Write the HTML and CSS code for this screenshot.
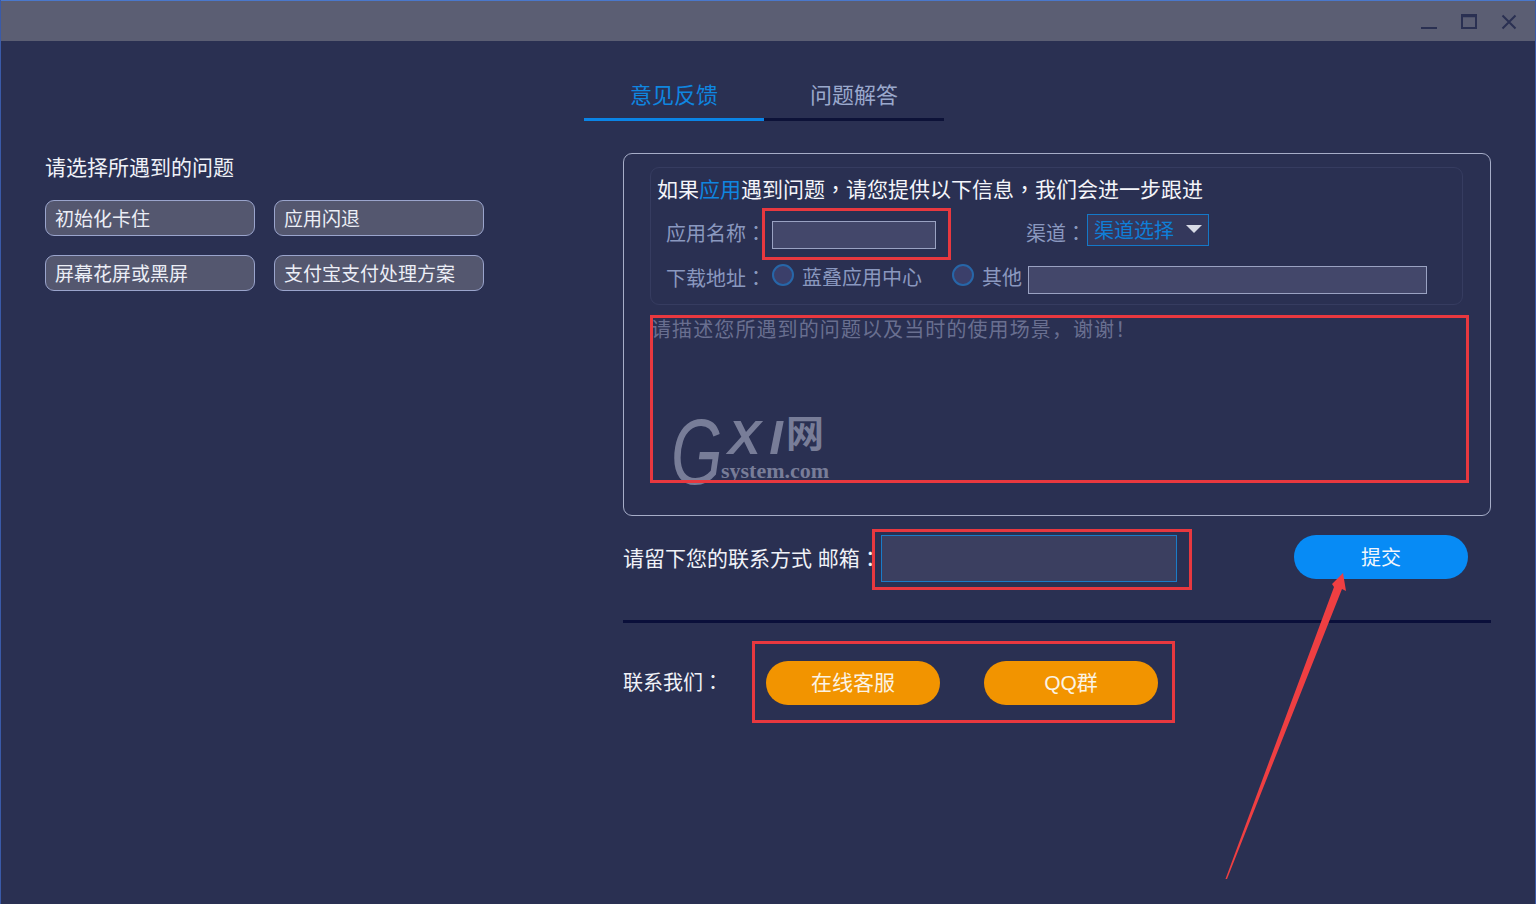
FILE: index.html
```html
<!DOCTYPE html>
<html lang="zh-CN">
<head>
    <meta charset="UTF-8">
    <meta name="viewport" content="width=device-width, initial-scale=1.0">
    <title>意见反馈</title>
    <link rel="stylesheet" href="styles.css">
</head>
<body>

<div class="app">
    <div class="titlebar">
        <svg class="win-icon" width="20" height="20" viewBox="0 0 20 20"><path d="M2 16H18" fill="none" stroke="#2a3052" stroke-width="2"/></svg>
        <svg class="win-icon" width="20" height="20" viewBox="0 0 20 20"><path d="M3 3H17V16H3Z M3 4.2H17" fill="none" stroke="#2a3052" stroke-width="2"/></svg>
        <svg class="win-icon" width="20" height="20" viewBox="0 0 20 20"><path d="M3.5 3.5L16.5 16.5M16.5 3.5L3.5 16.5" fill="none" stroke="#2a3052" stroke-width="2"/></svg>
    </div>

    <div class="tabs">
        <div class="tab active">意见反馈</div>
        <div class="tab">问题解答</div>
    </div>

    <div class="main">
        <div class="side">
            <h2 class="side-title">请选择所遇到的问题</h2>
            <div class="issue-grid">
                <button class="issue-btn">初始化卡住</button>
                <button class="issue-btn">应用闪退</button>
                <button class="issue-btn">屏幕花屏或黑屏</button>
                <button class="issue-btn">支付宝支付处理方案</button>
            </div>
        </div>

        <div class="content">
            <div class="panel">
                <div class="info-box">
                    <div class="info-title">如果<span class="blue">应用</span>遇到问题<span class="mid" lang="zh-TW">，</span>请您提供以下信息<span class="mid" lang="zh-TW">，</span>我们会进一步跟进</div>
                    <div class="form-row">
                        <label class="field-label label-wide drop">应用名称<span class="mid" lang="zh-TW">：</span></label>
                        <input class="text-input name-input" type="text">
                        <label class="field-label channel-label drop">渠道<span class="mid" lang="zh-TW">：</span></label>
                        <div class="select-box">
                            <span>渠道选择</span>
                            <span class="select-arrow"></span>
                        </div>
                    </div>
                    <div class="form-row row-address">
                        <label class="field-label label-wide">下载地址<span class="mid" lang="zh-TW">：</span></label>
                        <span class="radio"></span>
                        <span class="field-label radio-text">蓝叠应用中心</span>
                        <span class="radio radio-other"></span>
                        <span class="field-label radio-text">其他</span>
                        <input class="text-input other-input" type="text">
                    </div>
                </div>
                <textarea class="desc" placeholder="请描述您所遇到的问题以及当时的使用场景，谢谢！"></textarea>
                <div class="watermark">
                    <span class="wm-g">G</span>
                    <span class="wm-xi">X I</span>
                    <span class="wm-net">网</span>
                    <span class="wm-site">system.com</span>
                </div>
            </div>

            <div class="email-row">
                <label class="email-label">请留下您的联系方式 邮箱<span class="mid" lang="zh-TW">：</span></label>
                <input class="email-input" type="text">
                <button class="submit-btn">提交</button>
            </div>

            <div class="divider"></div>

            <div class="contact-row">
                <span class="contact-label">联系我们<span class="mid" lang="zh-TW">：</span></span>
                <button class="orange-btn">在线客服</button>
                <button class="orange-btn">QQ群</button>
            </div>
        </div>
    </div>

    <!-- 红色标注 -->
    <div class="mark mark-name"></div>
    <div class="mark mark-desc"></div>
    <div class="mark mark-email"></div>
    <div class="mark mark-contact"></div>
    <svg class="mark-arrow" width="1536" height="904" viewBox="0 0 1536 904">
        <path d="M1225.5 879L1334 587L1332 584L1343 573L1346 591L1342 589L1227 879Z" fill="#ef3f42"/>
    </svg>
</div>

</body>
</html>
```

FILE: styles.css
```css
* {
    box-sizing: border-box;
}
body {
    margin: 0;
    font-family: "Liberation Sans", "Noto Sans CJK SC", sans-serif;
    background-color: #2a3052;
}
button, input, textarea {
    font-family: inherit;
}
.app {
    position: relative;
    width: 1536px;
    height: 904px;
    overflow: hidden;
    background-color: #2a3052;
    border-left: 1px solid #3a5aa8;
    border-right: 1px solid #3a5aa8;
}
.titlebar {
    display: flex;
    justify-content: flex-end;
    gap: 20px;
    height: 41px;
    padding: 11px 16px 0 0;
    background-color: #5b5e73;
    border-top: 1px solid #4a78cc;
}
.win-icon {
    display: block;
}
.tabs {
    display: flex;
    margin: 36px 0 0 583px;
}
.tab {
    width: 180px;
    height: 44px;
    line-height: 38px;
    font-size: 22px;
    text-align: center;
    color: #9aa8cc;
    border-bottom: 3px solid #0d1238;
}
.tab.active {
    color: #0f86e0;
    border-bottom-color: #0a84e6;
}
.main {
    display: flex;
    padding: 32px 0 0 44px;
}
.side {
    width: 578px;
}
.side-title {
    height: 28px;
    margin: 0 0 19px;
    padding-top: 1px;
    font-size: 21px;
    font-weight: normal;
    line-height: 28px;
    color: #f0f2f8;
}
.issue-grid {
    display: grid;
    grid-template-columns: 210px 210px;
    grid-auto-rows: 36px;
    gap: 19px;
}
.issue-btn {
    padding: 0 0 2px 9px;
    font-size: 19px;
    text-align: left;
    color: #eceef6;
    background-color: #54576f;
    border: 1px solid #9aa4cc;
    border-radius: 9px;
}
.content {
    width: 868px;
}
.panel {
    position: relative;
    height: 363px;
    padding: 13px 26px;
    border: 1px solid #a6adc8;
    border-radius: 9px;
}
.info-box {
    width: 813px;
    height: 138px;
    padding: 6px 6px 0;
    border: 1px solid #363c60;
    border-radius: 9px;
}
.info-title {
    height: 28px;
    line-height: 28px;
    font-size: 21px;
    white-space: nowrap;
    color: #f4f5fa;
}
.blue {
    color: #0f86e0;
}
.mid {
    font-family: "Noto Sans CJK TC", sans-serif;
}
.form-row {
    display: flex;
    align-items: flex-start;
    height: 32px;
    margin: 12px 0 0 9px;
}
.row-address {
    height: 32px;
    margin-top: 18px;
}
.field-label {
    height: 28px;
    line-height: 28px;
    font-size: 20px;
    white-space: nowrap;
    color: #8a98bf;
}
.drop {
    margin-top: 5px;
}
.label-wide {
    width: 106px;
}
.text-input {
    display: block;
    height: 28px;
    padding: 0;
    background-color: #43476a;
    border: 1px solid #9aa2c2;
}
.name-input {
    width: 164px;
    margin-top: 7px;
}
.channel-label {
    width: 61px;
    margin-left: 90px;
}
.select-box {
    display: flex;
    align-items: center;
    width: 122px;
    height: 32px;
    padding: 2px 0 0 6px;
    font-size: 20px;
    line-height: 28px;
    color: #0f7fd8;
    background-color: #34385c;
    border: 1px solid #1478c8;
}
.select-arrow {
    width: 0;
    height: 0;
    margin: -5px 0 0 12px;
    border-left: 8px solid transparent;
    border-right: 8px solid transparent;
    border-top: 8px solid #d8dbe6;
}
.radio {
    display: block;
    width: 22px;
    height: 22px;
    background-color: #3b3f6a;
    border: 2px solid #2766a8;
    border-radius: 50%;
}
.radio-text {
    margin-left: 8px;
}
.radio-other {
    margin-left: 30px;
}
.other-input {
    width: 399px;
    margin: 2px 0 0 6px;
}
.desc {
    display: block;
    width: 816px;
    height: 160px;
    margin: 11px 0 0 1px;
    padding: 0;
    font-size: 20px;
    line-height: 28px;
    letter-spacing: 1.1px;
    color: #e0e3ee;
    background: transparent;
    border: none;
    outline: none;
    resize: none;
}
.desc::placeholder {
    color: #696f90;
    opacity: 1;
}
.watermark {
    position: absolute;
    left: 47px;
    top: 262px;
    width: 170px;
    height: 72px;
    color: #787d98;
}
.watermark span {
    position: absolute;
    line-height: 1;
}
.wm-g {
    left: 0;
    top: -10px;
    font-size: 92px;
    font-style: italic;
    transform: scaleX(0.72);
    transform-origin: left top;
}
.watermark .wm-xi {
    left: 57px;
    top: 2px;
    font-size: 49px;
    line-height: 0.8;
    font-style: italic;
    font-weight: bold;
    white-space: pre;
    word-spacing: -5px;
}
.wm-net {
    left: 115px;
    top: -1px;
    font-size: 38px;
    font-weight: bold;
}
.wm-site {
    left: 50px;
    top: 44px;
    font-family: "Liberation Serif", serif;
    font-size: 22px;
    font-weight: bold;
}
.email-row {
    display: flex;
    align-items: flex-start;
    height: 47px;
    margin-top: 19px;
}
.email-label {
    width: 258px;
    height: 47px;
    line-height: 44px;
    font-size: 21px;
    white-space: nowrap;
    color: #f0f2f8;
}
.email-input {
    width: 296px;
    height: 47px;
    padding: 0;
    background-color: #3b3f60;
    border: 1px solid #1a7cc8;
}
.submit-btn {
    width: 174px;
    height: 44px;
    margin-left: 117px;
    padding: 0 0 2px;
    font-size: 20px;
    color: #f2f6fc;
    background-color: #078bf5;
    border: none;
    border-radius: 22px;
}
.divider {
    height: 3px;
    margin-top: 38px;
    background-color: #0a0f3a;
}
.contact-row {
    display: flex;
    gap: 44px;
    margin-top: 38px;
}
.contact-label {
    width: 99px;
    height: 44px;
    line-height: 42px;
    font-size: 20px;
    white-space: nowrap;
    color: #f0f2f8;
}
.orange-btn {
    width: 174px;
    height: 44px;
    padding: 0 0 4px;
    font-size: 21px;
    color: #fbf3e4;
    background-color: #f29400;
    border: none;
    border-radius: 22px;
}
.mark {
    position: absolute;
    border: 3px solid #e8383f;
}
.mark-name {
    left: 761px;
    top: 208px;
    width: 189px;
    height: 52px;
}
.mark-desc {
    left: 649px;
    top: 315px;
    width: 819px;
    height: 168px;
}
.mark-email {
    left: 871px;
    top: 529px;
    width: 320px;
    height: 61px;
}
.mark-contact {
    left: 751px;
    top: 641px;
    width: 423px;
    height: 82px;
}
.mark-arrow {
    position: absolute;
    left: -1px;
    top: 0;
}
```
